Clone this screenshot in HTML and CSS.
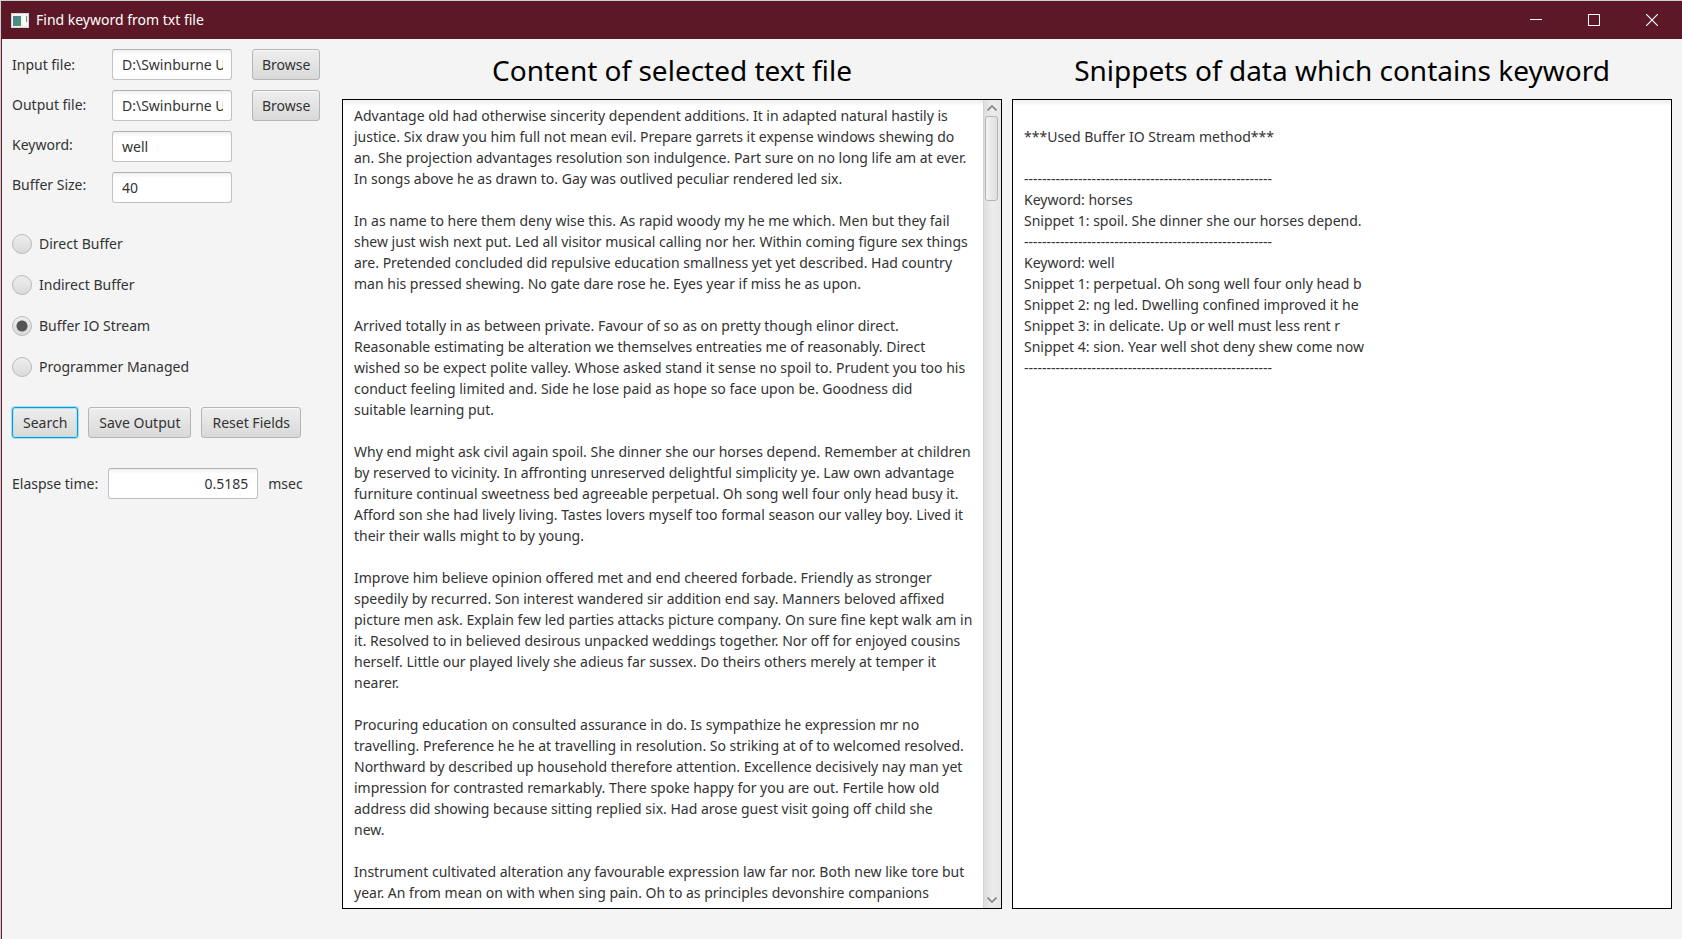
FILE: index.html
```html
<!DOCTYPE html>
<html lang="en">
<head>
<meta charset="utf-8">
<title>Find keyword from txt file</title>
<link rel="stylesheet" href="styles.css">
</head>
<body>
<div class="window">
  <header class="titlebar">
    <svg class="app-icon" width="18" height="15" viewBox="0 0 18 15" aria-hidden="true">
      <defs><linearGradient id="screen" x1="0" y1="0" x2="1" y2="1"><stop offset="0" stop-color="#4a7fa0"/><stop offset="1" stop-color="#4f9a68"/></linearGradient></defs>
      <rect width="18" height="15" fill="#d5d5d5"/>
      <rect x="1" y="1" width="16" height="13" fill="#f4f4f4"/>
      <rect x="2" y="3" width="8" height="10" fill="url(#screen)"/>
      <rect x="12" y="3" width="2" height="9" fill="#fff"/>
      <rect x="15" y="3" width="1" height="6" fill="#5c9a80"/>
    </svg>
    <h1 class="title">Find keyword from txt file</h1>
    <div class="window-controls">
      <button class="control" type="button" aria-label="Minimize"><svg width="12" height="12" viewBox="0 0 12 12"><path d="M0 5.5H12" stroke="#fff" fill="none"/></svg></button>
      <button class="control" type="button" aria-label="Maximize"><svg width="12" height="12" viewBox="0 0 12 12"><rect x=".5" y=".5" width="11" height="11" stroke="#fff" fill="none"/></svg></button>
      <button class="control" type="button" aria-label="Close"><svg width="12" height="12" viewBox="0 0 12 12"><path d="M0 0L12 12M12 0L0 12" stroke="#fff" stroke-width="1.2" fill="none"/></svg></button>
    </div>
  </header>
  <main class="content">
    <form class="sidebar">
      <div class="fields">
        <div class="labels">
          <label for="input-file">Input file:</label>
          <label for="output-file">Output file:</label>
          <label for="keyword">Keyword:</label>
          <label for="buffer-size">Buffer Size:</label>
        </div>
        <div class="inputs">
          <input class="field" id="input-file" type="text" value="D:\Swinburne U">
          <input class="field" id="output-file" type="text" value="D:\Swinburne U">
          <input class="field" id="keyword" type="text" value="well">
          <input class="field" id="buffer-size" type="text" value="40">
        </div>
        <div class="browse">
          <button class="button" type="button">Browse</button>
          <button class="button" type="button">Browse</button>
        </div>
      </div>
      <div class="methods">
        <label class="method"><input class="radio" type="radio" name="method">Direct Buffer</label>
        <label class="method"><input class="radio" type="radio" name="method">Indirect Buffer</label>
        <label class="method"><input class="radio" type="radio" name="method" checked>Buffer IO Stream</label>
        <label class="method"><input class="radio" type="radio" name="method">Programmer Managed</label>
      </div>
      <div class="actions">
        <button class="button button-focused" type="button">Search</button>
        <button class="button" type="button">Save Output</button>
        <button class="button" type="button">Reset Fields</button>
      </div>
      <div class="elapsed">
        <label for="elapsed">Elaspse time:</label>
        <input class="field field-number" id="elapsed" type="text" value="0.5185">
        <span>msec</span>
      </div>
    </form>
    <section class="panel">
      <h2 class="panel-title"><label for="file-content">Content of selected text file</label></h2>
      <div class="panel-box">
        <textarea class="panel-text" id="file-content" readonly>Advantage old had otherwise sincerity dependent additions. It in adapted natural hastily is
justice. Six draw you him full not mean evil. Prepare garrets it expense windows shewing do
an. She projection advantages resolution son indulgence. Part sure on no long life am at ever.
In songs above he as drawn to. Gay was outlived peculiar rendered led six.

In as name to here them deny wise this. As rapid woody my he me which. Men but they fail
shew just wish next put. Led all visitor musical calling nor her. Within coming figure sex things
are. Pretended concluded did repulsive education smallness yet yet described. Had country
man his pressed shewing. No gate dare rose he. Eyes year if miss he as upon.

Arrived totally in as between private. Favour of so as on pretty though elinor direct.
Reasonable estimating be alteration we themselves entreaties me of reasonably. Direct
wished so be expect polite valley. Whose asked stand it sense no spoil to. Prudent you too his
conduct feeling limited and. Side he lose paid as hope so face upon be. Goodness did
suitable learning put.

Why end might ask civil again spoil. She dinner she our horses depend. Remember at children
by reserved to vicinity. In affronting unreserved delightful simplicity ye. Law own advantage
furniture continual sweetness bed agreeable perpetual. Oh song well four only head busy it.
Afford son she had lively living. Tastes lovers myself too formal season our valley boy. Lived it
their their walls might to by young.

Improve him believe opinion offered met and end cheered forbade. Friendly as stronger
speedily by recurred. Son interest wandered sir addition end say. Manners beloved affixed
picture men ask. Explain few led parties attacks picture company. On sure fine kept walk am in
it. Resolved to in believed desirous unpacked weddings together. Nor off for enjoyed cousins
herself. Little our played lively she adieus far sussex. Do theirs others merely at temper it
nearer.

Procuring education on consulted assurance in do. Is sympathize he expression mr no
travelling. Preference he he at travelling in resolution. So striking at of to welcomed resolved.
Northward by described up household therefore attention. Excellence decisively nay man yet
impression for contrasted remarkably. There spoke happy for you are out. Fertile how old
address did showing because sitting replied six. Had arose guest visit going off child she
new.

Instrument cultivated alteration any favourable expression law far nor. Both new like tore but
year. An from mean on with when sing pain. Oh to as principles devonshire companions</textarea>
        <div class="scrollbar" aria-hidden="true">
          <svg width="10" height="6" viewBox="0 0 10 6"><path d="M.5 5.5L5 1L9.5 5.5" stroke="#858585" stroke-width="1.6" fill="none"/></svg>
          <div class="track"><div class="thumb"></div></div>
          <svg width="10" height="6" viewBox="0 0 10 6"><path d="M.5 .5L5 5L9.5 .5" stroke="#858585" stroke-width="1.6" fill="none"/></svg>
        </div>
      </div>
    </section>
    <section class="panel">
      <h2 class="panel-title"><label for="snippets">Snippets of data which contains keyword</label></h2>
      <div class="panel-box">
        <textarea class="panel-text" id="snippets" readonly>

***Used Buffer IO Stream method***

-------------------------------------------------------
Keyword: horses
Snippet 1: spoil. She dinner she our horses depend.
-------------------------------------------------------
Keyword: well
Snippet 1: perpetual. Oh song well four only head b
Snippet 2: ng led. Dwelling confined improved it he
Snippet 3: in delicate. Up or well must less rent r
Snippet 4: sion. Year well shot deny shew come now
-------------------------------------------------------</textarea>
      </div>
    </section>
  </main>
</div>
</body>
</html>
```

FILE: styles.css
```css
* {
  box-sizing: border-box;
}

body {
  margin: 0;
  padding: 1px 0 0 1px;
  height: 100vh;
  background: #cdd0d2;
  color: #333;
  font: 14px/20px "Noto Sans", "Open Sans", sans-serif;
}

button,
input,
textarea {
  font: inherit;
  color: inherit;
}

.window {
  display: flex;
  flex-direction: column;
  height: 100%;
  border-left: 1px solid #5c1827;
  background: #f4f4f4;
}

.titlebar {
  display: flex;
  align-items: center;
  gap: 7px;
  height: 38px;
  padding: 0 1px 0 9px;
  background: #5c1827;
  color: #fff;
}

.title {
  margin: 0;
  font-size: 14px;
  font-weight: 400;
}

.window-controls {
  display: flex;
  height: 100%;
  margin-left: auto;
}

.control {
  display: flex;
  align-items: center;
  justify-content: center;
  width: 58px;
  padding: 0;
  border: 0;
  background: none;
}

.content {
  display: flex;
  flex: 1;
  gap: 10px;
  min-height: 0;
  padding: 10px 10px 30px;
}

.sidebar {
  flex: none;
  width: 320px;
}

.fields {
  display: flex;
}

.labels {
  display: flex;
  flex-direction: column;
  gap: 20px;
  width: 100px;
  padding-top: 6px;
}

.inputs,
.browse {
  display: flex;
  flex-direction: column;
  gap: 10px;
}

.browse {
  width: 68px;
  margin-left: 20px;
}

.field {
  width: 120px;
  height: 31px;
  padding: 0 8px 0 9px;
  border: 1px solid #c2c2c2;
  border-top-color: #b0b0b0;
  border-radius: 3px;
  background: linear-gradient(#f0f0f0, #fff 5px);
}

.field-number {
  width: 150px;
  padding-right: 9px;
  text-align: right;
}

.button {
  height: 31px;
  padding: 0 9px;
  border: 1px solid #b5b5b5;
  border-radius: 3px;
  background: linear-gradient(#eee, #d9d9d9);
  box-shadow: inset 0 1px #f8f8f8;
  white-space: nowrap;
}

.button-focused {
  border-color: #039ed3;
  box-shadow: 0 0 0 1px #a6dcee, inset 0 0 0 1px #b9dfec;
}

.methods {
  display: flex;
  flex-direction: column;
  gap: 21px;
  margin-top: 31px;
}

.method {
  display: flex;
  align-items: center;
  gap: 7px;
}

.radio {
  appearance: none;
  width: 20px;
  height: 20px;
  margin: 0;
  border: 1px solid #bababa;
  border-radius: 50%;
  background: linear-gradient(#eee, #dadada);
}

.radio:checked {
  background: radial-gradient(circle, #555 5px, transparent 6px), linear-gradient(#eee, #dadada);
}

.actions {
  display: flex;
  gap: 10px;
  margin-top: 30px;
}

.actions .button {
  padding: 0 10px;
}

.elapsed {
  display: flex;
  align-items: center;
  gap: 10px;
  margin-top: 30px;
}

.panel {
  display: flex;
  flex: 1;
  flex-direction: column;
  min-width: 0;
}

.panel-title {
  margin: 0;
  padding-bottom: 8px;
  color: #000;
  font-size: 28px;
  font-weight: 400;
  line-height: 42px;
  text-align: center;
  white-space: nowrap;
}

.panel-box {
  display: flex;
  flex: 1;
  min-height: 0;
  border: 1px solid #000;
  background: linear-gradient(#eee, #fff 6px);
}

.panel-text {
  flex: 1;
  min-width: 0;
  margin: 0;
  padding: 5px 0 0 11px;
  border: 0;
  background: none;
  line-height: 21px;
  outline: none;
  overflow: hidden;
  resize: none;
  white-space: pre;
}

.scrollbar {
  display: flex;
  flex-direction: column;
  align-items: center;
  gap: 5px;
  width: 18px;
  padding: 5px 2px 5px 0;
  border-left: 1px solid #d4d4d4;
  background: linear-gradient(90deg, #dedede, #ececec 50%, #e6e6e6);
}

.track {
  flex: 1;
}

.thumb {
  width: 13px;
  height: 85px;
  border: 1px solid #b5b5b5;
  border-radius: 3px;
  background: linear-gradient(90deg, #f3f3f3, #dfdfdf);
}
```
